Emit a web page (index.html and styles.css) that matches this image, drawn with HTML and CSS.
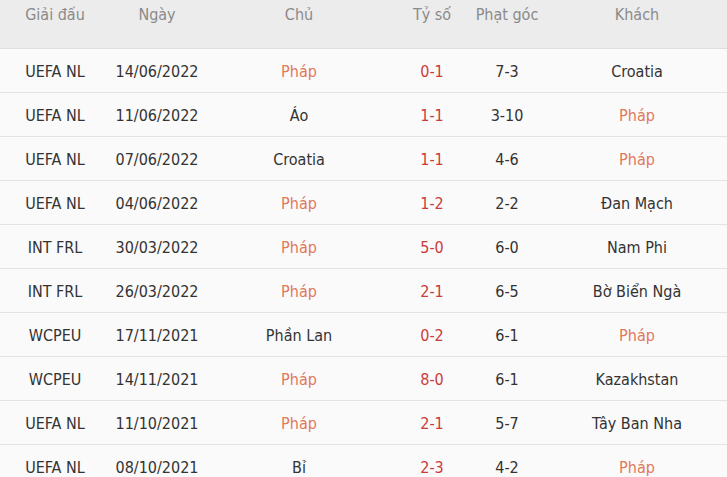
FILE: index.html
```html
<!DOCTYPE html>
<html lang="vi">
<head>
<meta charset="utf-8">
<link rel="stylesheet" href="styles.css">
</head>
<body>
<table class="matches">
  <colgroup>
    <col class="c-league"><col class="c-date"><col class="c-home"><col class="c-score"><col class="c-corner"><col class="c-away">
  </colgroup>
  <thead>
    <tr><th>Giải đấu</th><th>Ngày</th><th>Chủ</th><th>Tỷ số</th><th>Phạt góc</th><th>Khách</th></tr>
  </thead>
  <tbody>
    <tr><td>UEFA NL</td><td>14/06/2022</td><td class="team-fr">Pháp</td><td class="score">0-1</td><td>7-3</td><td>Croatia</td></tr>
    <tr><td>UEFA NL</td><td>11/06/2022</td><td>Áo</td><td class="score">1-1</td><td>3-10</td><td class="team-fr">Pháp</td></tr>
    <tr><td>UEFA NL</td><td>07/06/2022</td><td>Croatia</td><td class="score">1-1</td><td>4-6</td><td class="team-fr">Pháp</td></tr>
    <tr><td>UEFA NL</td><td>04/06/2022</td><td class="team-fr">Pháp</td><td class="score">1-2</td><td>2-2</td><td>Đan Mạch</td></tr>
    <tr><td>INT FRL</td><td>30/03/2022</td><td class="team-fr">Pháp</td><td class="score">5-0</td><td>6-0</td><td>Nam Phi</td></tr>
    <tr><td>INT FRL</td><td>26/03/2022</td><td class="team-fr">Pháp</td><td class="score">2-1</td><td>6-5</td><td>Bờ Biển Ngà</td></tr>
    <tr><td>WCPEU</td><td>17/11/2021</td><td>Phần Lan</td><td class="score">0-2</td><td>6-1</td><td class="team-fr">Pháp</td></tr>
    <tr><td>WCPEU</td><td>14/11/2021</td><td class="team-fr">Pháp</td><td class="score">8-0</td><td>6-1</td><td>Kazakhstan</td></tr>
    <tr><td>UEFA NL</td><td>11/10/2021</td><td class="team-fr">Pháp</td><td class="score">2-1</td><td>5-7</td><td>Tây Ban Nha</td></tr>
    <tr><td>UEFA NL</td><td>08/10/2021</td><td>Bỉ</td><td class="score">2-3</td><td>4-2</td><td class="team-fr">Pháp</td></tr>
  </tbody>
</table>
</body>
</html>
```
FILE: styles.css
```css
html, body {
  margin: 0;
  padding: 0;
  background: #fafafa;
}
body {
  font-family: "DejaVu Sans Condensed", "DejaVu Sans", sans-serif;
  font-size: 16px;
  color: #333;
}
.matches {
  width: 730px;
  border-collapse: collapse;
  table-layout: fixed;
}
.c-league { width: 110px; }
.c-date { width: 94px; }
.c-home { width: 190px; }
.c-score { width: 76px; }
.c-corner { width: 74px; }
.c-away { width: 186px; }
.matches th {
  background: #ececec;
  color: #8a8a8a;
  font-weight: normal;
  height: 48px;
  padding: 0;
  vertical-align: top;
  line-height: 30px;
  text-align: center;
  border-bottom: 1px solid #dedede;
}
.matches td {
  height: 41px;
  padding: 2px 0 0;
  text-align: center;
  vertical-align: middle;
  border-bottom: 1px solid #e3e3e3;
  background: #fafafa;
}
.matches td.team-fr { color: #e0785a; }
.matches td.score { color: #cc3b3b; }
```
